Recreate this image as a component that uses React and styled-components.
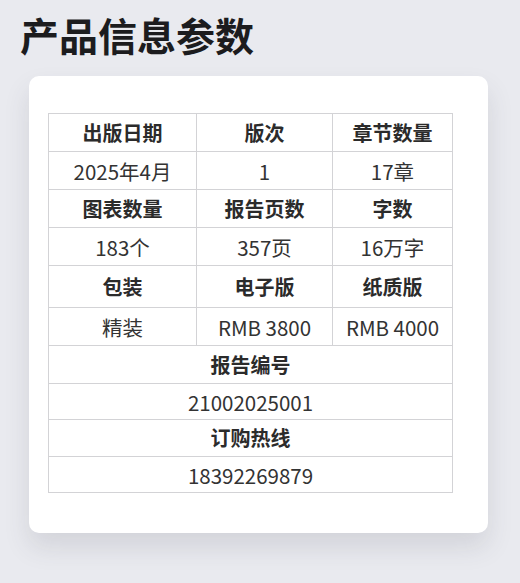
import React from 'react'
import styled, { createGlobalStyle } from 'styled-components'

const GlobalStyle = createGlobalStyle`
  body {
    margin: 0;
    background: #e9eaef;
    font-family: "Noto Sans CJK SC", "Noto Sans", sans-serif;
    color: #333;
  }
`

const rows = [
  { h: 38, cells: ['出版日期', '版次', '章节数量'], head: true },
  { h: 38, cells: ['2025年4月', '1', '17章'] },
  { h: 38, cells: ['图表数量', '报告页数', '字数'], head: true },
  { h: 38, cells: ['183个', '357页', '16万字'] },
  { h: 42, cells: ['包装', '电子版', '纸质版'], head: true },
  { h: 38, cells: ['精装', 'RMB 3800', 'RMB 4000'] },
  { h: 38, cells: ['报告编号'], head: true },
  { h: 36, cells: ['21002025001'] },
  { h: 37, cells: ['订购热线'], head: true },
  { h: 36, cells: ['18392269879'] },
]

const App = () => {
  return (
    <Page>
      <GlobalStyle />
      <Title>产品信息参数</Title>
      <Card>
        <Table>
          <colgroup>
            <col style={{ width: 148 }} />
            <col style={{ width: 136 }} />
            <col style={{ width: 120 }} />
          </colgroup>
          <tbody>
            {rows.map((row, i) => (
              <Row key={i} $h={row.h}>
                {row.cells.map((c, j) => (
                  <Cell key={j} $head={row.head} colSpan={row.cells.length === 1 ? 3 : 1}>
                    {c}
                  </Cell>
                ))}
              </Row>
            ))}
          </tbody>
        </Table>
      </Card>
    </Page>
  )
}

export default App

const Page = styled.div`
  padding: 11px 0 50px 20px;
`

const Title = styled.h1`
  margin: 0;
  font-size: 39px;
  line-height: 46px;
  font-weight: 700;
  color: #1c1c1e;
`

const Card = styled.div`
  margin-top: 19px;
  margin-left: 9px;
  width: 459px;
  box-sizing: border-box;
  padding: 37px 36px 40px 19px;
  background: #fff;
  border-radius: 10px;
  box-shadow: 0 14px 26px rgba(60, 62, 80, 0.13);
`

const Table = styled.table`
  width: 404px;
  border-collapse: collapse;
  table-layout: fixed;
`

const Row = styled.tr`
  height: ${p => p.$h}px;
`

const Cell = styled.td`
  border: 1px solid #d3d3d6;
  padding: 0;
  text-align: center;
  vertical-align: middle;
  font-size: ${p => (p.$head ? '20px' : '20.5px')};
  line-height: 24px;
  font-weight: ${p => (p.$head ? 700 : 400)};
  color: ${p => (p.$head ? '#2b2b2b' : '#333')};
`
